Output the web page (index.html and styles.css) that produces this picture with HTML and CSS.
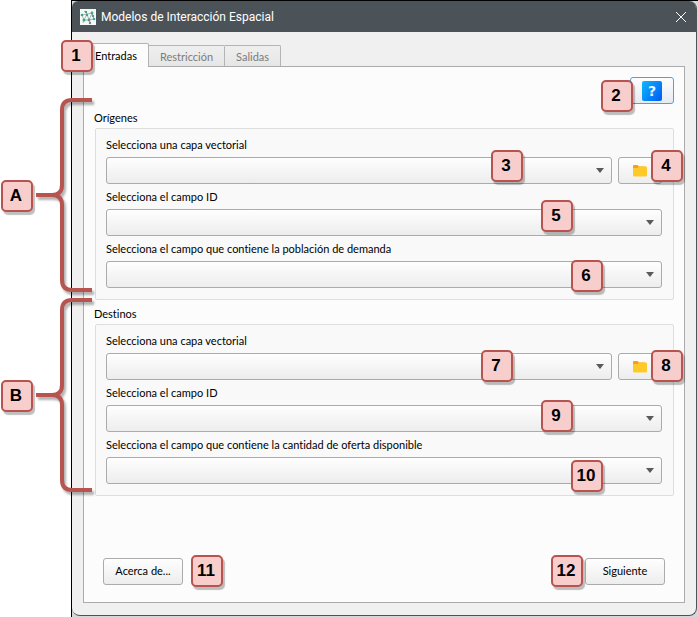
FILE: index.html
```html
<!DOCTYPE html>
<html lang="es">
<head>
<meta charset="utf-8">
<title>Modelos de Interacción Espacial</title>
<link rel="stylesheet" href="styles.css">
</head>
<body>
<div class="desktop">
  <main class="dialog">
    <header class="titlebar">
      <svg class="app-icon" viewBox="0 0 16 16" aria-hidden="true">
        <rect width="16" height="16" fill="#f6faf7"/>
        <path d="M2 6L4 11L7 5L9 11L12 4L14 10M4 2L7 5L12 4M2 6L7 5M4 11L9 11L14 10M4 11L3 14M9 11L10 14M12 4L13 7" fill="none" stroke="#a3bfb4" stroke-width="1"/>
        <g fill="#3fa58b"><circle cx="2" cy="6" r="1.300"/><circle cx="6" cy="3" r="1.200"/><circle cx="4" cy="11" r="1.500"/><circle cx="12" cy="4" r="1.400"/><circle cx="14" cy="10" r="1.300"/></g>
        <g fill="#71868d"><circle cx="9" cy="11" r="1.400"/><circle cx="7" cy="6" r="1.200"/><circle cx="10" cy="14" r="1.200"/><circle cx="13" cy="7" r="1.200"/></g>
      </svg>
      <h1 class="title">Modelos de Interacción Espacial</h1>
      <button class="close" type="button" aria-label="Cerrar">
        <svg viewBox="0 0 10 10" aria-hidden="true"><path d="M0 0L10 10M10 0L0 10" stroke="#fff" stroke-width="1"/></svg>
      </button>
    </header>

    <div class="content">
      <div class="tabs" role="tablist">
        <button class="tab tab-active" type="button" role="tab" aria-selected="true">Entradas</button>
        <button class="tab" type="button" role="tab" aria-selected="false">Restricción</button>
        <button class="tab" type="button" role="tab" aria-selected="false">Salidas</button>
        <span class="badge badge-tabs">1</span>
      </div>

      <form class="pane">
        <div class="toolbar">
          <button class="button button-help" type="button" aria-label="Ayuda"><span class="help-icon">?</span></button>
          <span class="badge badge-help">2</span>
        </div>

        <section class="section">
          <h2 class="section-title">Orígenes</h2>
          <div class="group">
            <label class="label" for="o-capa">Selecciona una capa vectorial</label>
            <div class="row">
              <div class="combo"><select id="o-capa"></select><span class="badge at-3">3</span></div>
              <div class="browse">
                <button class="button button-folder" type="button" aria-label="Abrir capa de orígenes"><svg class="folder" viewBox="0 0 14 12" aria-hidden="true"><path d="M0 1Q0 0 1 0H4.500L6 1.500H12V4H0Z" fill="#f59f1c"/><path d="M0 3H4.500L6 1.500H13Q14 1.500 14 2.500V10Q14 11.500 12.500 11.500H1.500Q0 11.500 0 10Z" fill="#ffca28"/></svg></button>
                <span class="badge at-4">4</span>
              </div>
            </div>
            <label class="label" for="o-id">Selecciona el campo ID</label>
            <div class="combo"><select id="o-id"></select><span class="badge at-5">5</span></div>
            <label class="label" for="o-pob">Selecciona el campo que contiene la población de demanda</label>
            <div class="combo"><select id="o-pob"></select><span class="badge at-6">6</span></div>
          </div>
          <svg class="brace" viewBox="0 0 60 200" aria-hidden="true"><path d="M58 5H38Q28 5 28 15V90Q28 100 18 100H2H18Q28 100 28 110V185Q28 195 38 195H58"/></svg>
          <span class="badge badge-section">A</span>
        </section>

        <section class="section section-next">
          <h2 class="section-title">Destinos</h2>
          <div class="group">
            <label class="label" for="d-capa">Selecciona una capa vectorial</label>
            <div class="row">
              <div class="combo"><select id="d-capa"></select><span class="badge at-7">7</span></div>
              <div class="browse">
                <button class="button button-folder" type="button" aria-label="Abrir capa de destinos"><svg class="folder" viewBox="0 0 14 12" aria-hidden="true"><path d="M0 1Q0 0 1 0H4.500L6 1.500H12V4H0Z" fill="#f59f1c"/><path d="M0 3H4.500L6 1.500H13Q14 1.500 14 2.500V10Q14 11.500 12.500 11.500H1.500Q0 11.500 0 10Z" fill="#ffca28"/></svg></button>
                <span class="badge at-8">8</span>
              </div>
            </div>
            <label class="label" for="d-id">Selecciona el campo ID</label>
            <div class="combo"><select id="d-id"></select><span class="badge at-9">9</span></div>
            <label class="label" for="d-oferta">Selecciona el campo que contiene la cantidad de oferta disponible</label>
            <div class="combo"><select id="d-oferta"></select><span class="badge at-10">10</span></div>
          </div>
          <svg class="brace" viewBox="0 0 60 200" aria-hidden="true"><path d="M58 5H38Q28 5 28 15V90Q28 100 18 100H2H18Q28 100 28 110V185Q28 195 38 195H58"/></svg>
          <span class="badge badge-section">B</span>
        </section>

        <footer class="footer">
          <div class="action action-about">
            <button class="button" type="button">Acerca de...</button>
            <span class="badge">11</span>
          </div>
          <div class="action action-next">
            <span class="badge">12</span>
            <button class="button" type="button">Siguiente</button>
          </div>
        </footer>
      </form>
    </div>
  </main>
</div>
</body>
</html>
```
FILE: styles.css
```css
* {
  box-sizing: border-box;
}

body {
  margin: 0;
  padding-left: 71px;
  background: #fff;
  color: #000;
  font: 11px/14px Lato, "Liberation Sans", sans-serif;
  font-variant-ligatures: none;
}

button,
select {
  font: inherit;
  font-variant-ligatures: none;
  color: inherit;
}

.desktop {
  display: flex;
  min-height: 100vh;
  padding: 0 1px 1px 0;
  border-top: 1px solid #000;
  border-left: 1px solid #000;
  background: #d6d8da;
}

.dialog {
  flex: 1;
  display: flex;
  flex-direction: column;
  border-right: 1px solid #4b5359;
  border-bottom: 1px solid #4b5359;
  border-radius: 6px 8px 8px 8px;
  background: #f0f0f0;
}

.titlebar {
  display: flex;
  align-items: center;
  height: 31px;
  padding: 0 10px 0 8px;
  border-radius: 6px 7px 0 0;
  background: #4b5359;
  color: #fff;
}

.app-icon {
  width: 16px;
  height: 16px;
}

.title {
  margin: 0 auto 0 5px;
  font: 12px/16px Roboto, "Liberation Sans", sans-serif;
}

.close {
  display: flex;
  padding: 0;
  border: 0;
  background: none;
}

.close svg {
  width: 10px;
  height: 10px;
  overflow: visible;
}

.content {
  flex: 1;
  display: flex;
  flex-direction: column;
  padding: 11px 11px 12px;
}

.tabs {
  position: relative;
  display: flex;
  align-items: flex-end;
  height: 23px;
}

.tab {
  height: 21px;
  padding: 1px 11px 0;
  border: 1px solid #b4b4b4;
  border-bottom: 0;
  border-left: 0;
  border-radius: 0 2px 0 0;
  background: linear-gradient(#efefef, #e6e6e6);
  color: #7c7c7c;
}

.tab-active {
  z-index: 1;
  height: 24px;
  margin-bottom: -1px;
  border-left: 1px solid #b4b4b4;
  border-radius: 2px 2px 0 0;
  background: #fcfcfc;
  color: #000;
}

.pane {
  flex: 1;
  display: flex;
  flex-direction: column;
  padding: 10px 10px 15px 11px;
  border: 1px solid #ababab;
  background: #fcfcfc;
}

.toolbar {
  position: relative;
  display: flex;
  justify-content: flex-end;
}

.button {
  width: 80px;
  height: 27px;
  padding: 0;
  border: 1px solid #ababab;
  border-radius: 3px;
  background: linear-gradient(#fefefe, #ededed);
}

.button-help,
.button-folder {
  display: flex;
  align-items: center;
  justify-content: center;
  width: 44px;
}

.button-help {
  border-color: #48a2e6;
  background: linear-gradient(#fdfdfe, #e5ebf1);
}

.help-icon {
  width: 20px;
  height: 20px;
  border-radius: 2px;
  background: linear-gradient(125deg, #10b8fa, #0059f5);
  color: #e9f5ff;
  font: bold 14px/20px "DejaVu Sans", sans-serif;
}

.folder {
  width: 14px;
  height: 12px;
}

.section {
  position: relative;
  margin-top: 7px;
}

.section-title {
  margin: 0 0 3px -1px;
  font: inherit;
  font-variant-ligatures: none;
}

.group {
  display: flex;
  flex-direction: column;
  padding: 9px 11px 11px 10px;
  border: 1px solid #dedede;
  border-radius: 2px;
  background: #f9f9f9;
}

.label {
  margin-bottom: 5px;
}

.combo + .label,
.row + .label {
  margin-top: 6px;
}

.row {
  display: flex;
  gap: 6px;
}

.combo {
  position: relative;
}

.row .combo {
  flex: 1;
}

.browse {
  position: relative;
}

.combo select {
  display: block;
  width: 100%;
  height: 27px;
  border: 1px solid #ababab;
  border-radius: 3px;
  background: linear-gradient(#fefefe, #ededed);
  appearance: none;
}

.combo::after {
  content: "";
  position: absolute;
  top: 11px;
  right: 8px;
  border: 4px solid transparent;
  border-top: 5px solid #5a5a5a;
  border-bottom: 0;
  pointer-events: none;
}

.footer {
  display: flex;
  justify-content: space-between;
  margin-top: auto;
  padding: 0 9px 0 8px;
}

.action {
  display: flex;
  align-items: center;
}

.action-about {
  gap: 8px;
}

.action-next {
  gap: 2px;
}

/* Numbered callouts drawn over the dialog */
.badge {
  z-index: 2;
  width: 32px;
  height: 32px;
  padding-right: 2px;
  border: 2px solid #b85450;
  border-radius: 5px;
  background: #f8cecc;
  box-shadow: 2px 3px 1px rgba(0, 0, 0, 0.25);
  font: bold 17px/27px "Liberation Sans", Arial, sans-serif;
  text-align: center;
}

.tabs .badge,
.toolbar .badge,
.combo .badge,
.browse .badge,
.badge-section {
  position: absolute;
}

.badge-tabs { top: -3px; left: -22px; }
.badge-help { top: 3px; right: 41px; }
.at-3 { top: -7px; right: 89px; }
.at-4 { top: -7px; right: -21px; }
.at-5 { top: -9px; right: 89px; }
.at-6 { top: -1px; right: 59px; }
.at-7 { top: -3px; right: 99px; }
.at-8 { top: -3px; right: -21px; }
.at-9 { top: -5px; right: 89px; }
.at-10 { top: 3px; right: 59px; }
.badge-section { top: 69px; left: -94px; }

.brace {
  position: absolute;
  top: -16px;
  left: -61px;
  width: 60px;
  height: 200px;
  overflow: visible;
  fill: none;
  stroke: #b85450;
  stroke-width: 4px;
  filter: drop-shadow(2px 3px 1px rgba(0, 0, 0, 0.3));
}

.section-next .brace { top: -12px; }
.section-next .badge-section { top: 73px; }
```
